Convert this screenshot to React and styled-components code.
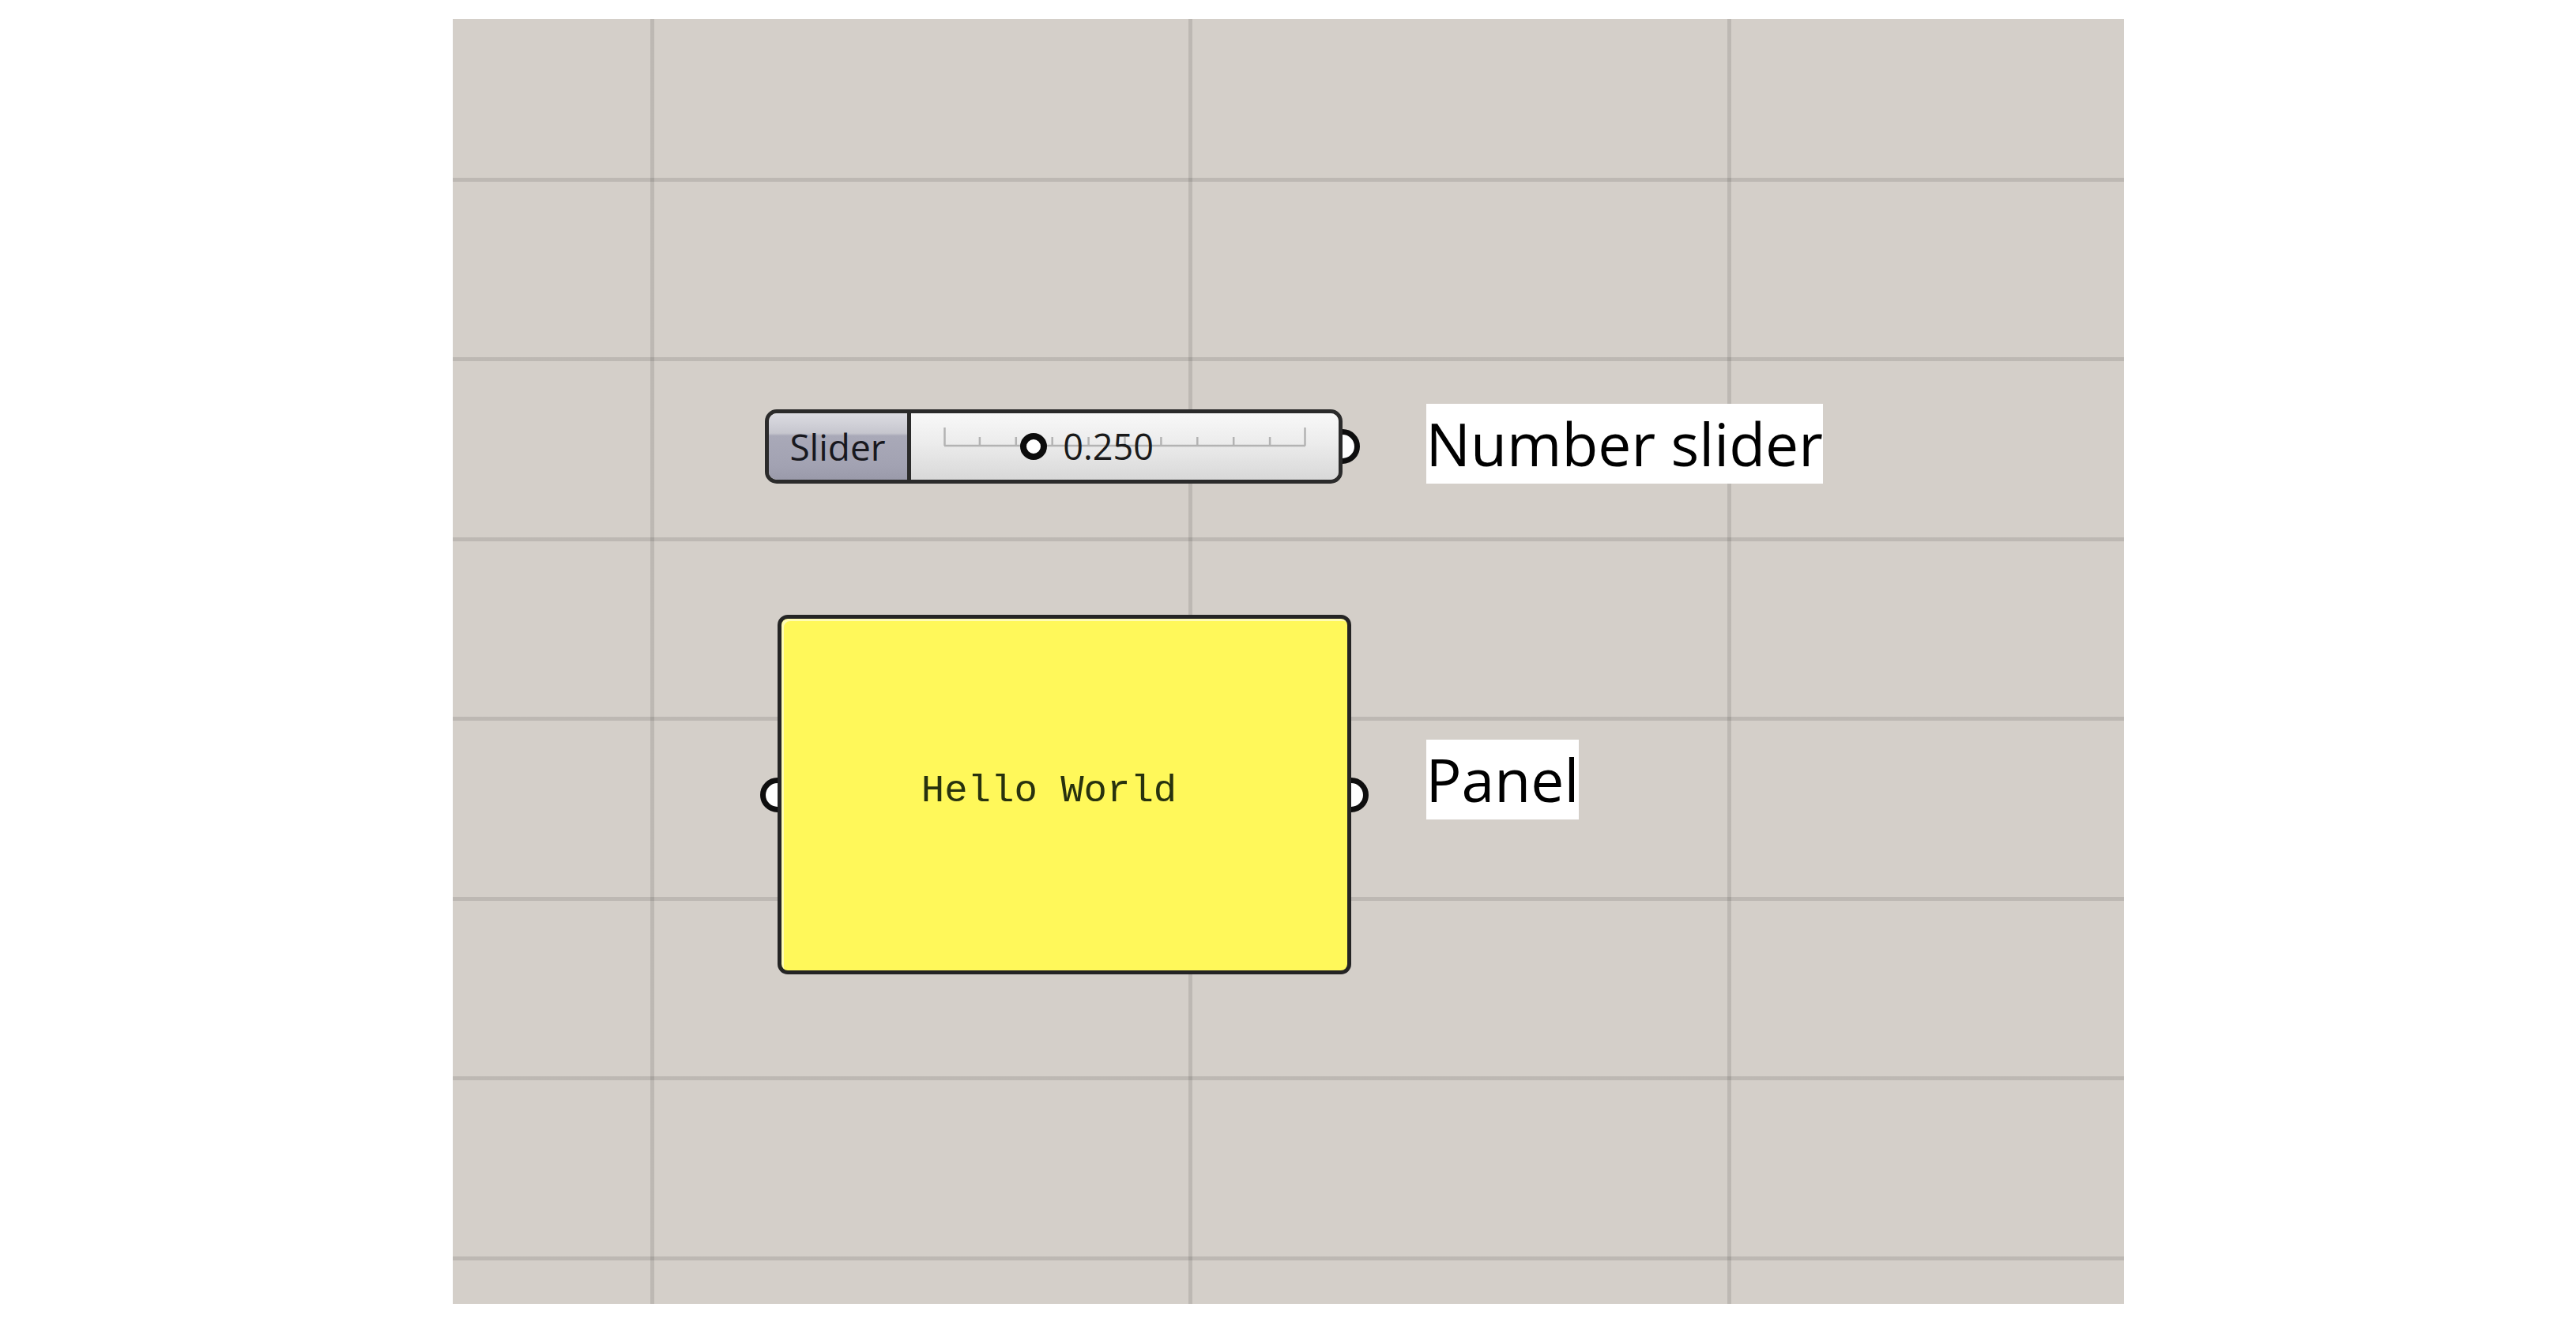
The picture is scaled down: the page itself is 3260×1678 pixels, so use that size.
import React from 'react';
import styled, { createGlobalStyle } from 'styled-components';

const GlobalStyle = createGlobalStyle`
  html, body {
    margin: 0;
    background: #ffffff;
  }
  body {
    font-family: 'Open Sans', 'Noto Sans', sans-serif;
  }
`;

const Page = styled.div`
  display: flex;
  justify-content: center;
  padding-top: 24px;
`;

// grasshopper-like canvas with the faint grid
const Canvas = styled.div`
  position: relative;
  isolation: isolate;
  width: 2115px;
  height: 1626px;
  background-color: #d4cfc9;
  background-image:
    repeating-linear-gradient(90deg, transparent 0 250px, rgba(0, 0, 0, 0.11) 250px 255px, transparent 255px 681.5px),
    repeating-linear-gradient(180deg, transparent 0 201px, rgba(0, 0, 0, 0.11) 201px 206px, transparent 206px 227.5px);
`;

const Node = styled.div`
  position: absolute;
  left: ${(p) => p.$x}px;
  top: ${(p) => p.$y}px;
`;

const Grip = styled.div`
  position: absolute;
  top: 50%;
  ${(p) => p.$side}: -22px;
  width: 44px;
  height: 44px;
  margin-top: -22px;
  box-sizing: border-box;
  border: 7px solid #0e0e0e;
  border-radius: 50%;
  background: #ffffff;
  z-index: -1;
`;

const SliderBox = styled.div`
  display: flex;
  width: 731px;
  height: 94px;
  box-sizing: border-box;
  border: 5px solid #2b2b2b;
  border-radius: 15px;
  overflow: hidden;
`;

const SliderLabel = styled.div`
  width: 177px;
  display: flex;
  align-items: center;
  justify-content: center;
  border-right: 5px solid #2b2b2b;
  background: linear-gradient(
    180deg,
    #dcdce2 0%,
    #c6c6ce 30%,
    #a9a9b8 34%,
    #a2a2b2 80%,
    #9a9aaa 100%
  );
  color: #18181e;
  font-size: 46px;
  font-family: 'Open Sans', sans-serif;
`;

const SliderBody = styled.div`
  flex: 1;
  display: flex;
  padding: 0 41px;
  background: linear-gradient(180deg, #f8f8f8 0%, #ececec 45%, #d8d8d8 100%);
`;

const Track = styled.div`
  position: relative;
  flex: 1;
  height: 100%;

  svg {
    display: block;
  }
`;

const Thumb = styled.div`
  position: absolute;
  top: 25px;
  display: flex;
  align-items: center;
  gap: 20px;
`;

const Knob = styled.div`
  width: 34px;
  height: 34px;
  box-sizing: border-box;
  border: 8px solid #0c0c0c;
  border-radius: 50%;
  background: #ffffff;
`;

const Value = styled.span`
  font-family: 'Open Sans', sans-serif;
  font-size: 45px;
  line-height: 34px;
  color: #1a1a1a;
`;

const PanelBox = styled.div`
  width: 726px;
  height: 455px;
  box-sizing: border-box;
  border: 5px solid #242424;
  border-radius: 13px;
  background: #fff85a;
  box-shadow: inset 3px 3px 0 rgba(255, 255, 255, 0.55);
  display: flex;
  align-items: center;
  justify-content: center;
  padding: 0 38px 10px 0;
`;

const PanelText = styled.span`
  font-family: 'Liberation Mono', 'Courier New', monospace;
  font-size: 49px;
  color: #28320e;
  white-space: pre;
`;

const Caption = styled.span`
  position: absolute;
  left: ${(p) => p.$x}px;
  top: ${(p) => p.$y}px;
  background: #ffffff;
  color: #000000;
  font-family: 'Open Sans', sans-serif;
  font-size: 75px;
  line-height: 101px;
  white-space: nowrap;
`;

function TrackTicks({ width = 459, height = 84, count = 11 }) {
  const step = width / (count - 1);
  const base = 41;
  return (
    <svg width={width} height={height} viewBox={`0 0 ${width} ${height}`}>
      <line x1="1" y1={base} x2={width - 1} y2={base} stroke="#b3b3b3" strokeWidth="2.5" />
      {Array.from({ length: count }).map((_, i) => {
        const x = Math.min(Math.max(i * step, 1.5), width - 1.5);
        const isEnd = i === 0 || i === count - 1;
        return (
          <line
            key={i}
            x1={x}
            x2={x}
            y1={isEnd ? base - 23 : base - 11}
            y2={base}
            stroke="#b3b3b3"
            strokeWidth="2.5"
          />
        );
      })}
    </svg>
  );
}

function NumberSlider({ label, value, min = 0, max = 1 }) {
  const t = (value - min) / (max - min);
  return (
    <>
      <SliderBox>
        <SliderLabel>{label}</SliderLabel>
        <SliderBody>
          <Track>
            <TrackTicks />
            <Thumb style={{ left: `calc(${t * 100}% - 17px)` }}>
              <Knob />
              <Value>{value.toFixed(3)}</Value>
            </Thumb>
          </Track>
        </SliderBody>
      </SliderBox>
      <Grip $side="right" />
    </>
  );
}

function Panel({ text }) {
  return (
    <>
      <Grip $side="left" />
      <PanelBox>
        <PanelText>{text}</PanelText>
      </PanelBox>
      <Grip $side="right" />
    </>
  );
}

export default function App() {
  return (
    <>
      <GlobalStyle />
      <Page>
        <Canvas>
          <Node $x={395} $y={494}>
            <NumberSlider label="Slider" value={0.25} />
          </Node>
          <Node $x={411} $y={754}>
            <Panel text="Hello World" />
          </Node>
          <Caption $x={1232} $y={487}>Number slider</Caption>
          <Caption $x={1232} $y={912}>Panel</Caption>
        </Canvas>
      </Page>
    </>
  );
}
